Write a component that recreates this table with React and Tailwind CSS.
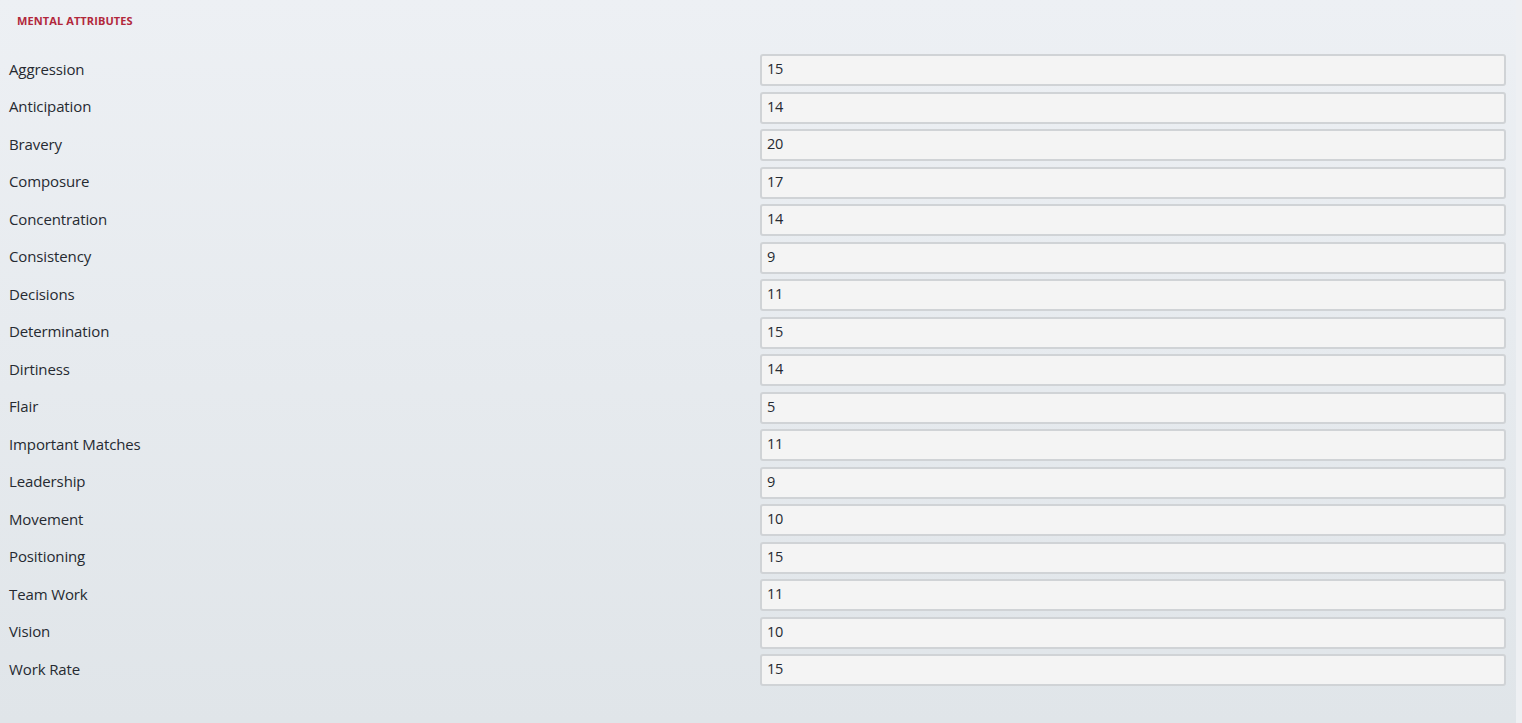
const attributes = [
  ['Aggression', 15],
  ['Anticipation', 14],
  ['Bravery', 20],
  ['Composure', 17],
  ['Concentration', 14],
  ['Consistency', 9],
  ['Decisions', 11],
  ['Determination', 15],
  ['Dirtiness', 14],
  ['Flair', 5],
  ['Important Matches', 11],
  ['Leadership', 9],
  ['Movement', 10],
  ['Positioning', 15],
  ['Team Work', 11],
  ['Vision', 10],
  ['Work Rate', 15],
]

export default function App() {
  return (
    <div
      className="flex h-[723px] w-full bg-gradient-to-b from-[#edf0f4] to-[#e0e5e9] text-[#262a31]"
      style={{ fontFamily: '"Open Sans", "Noto Sans", sans-serif' }}
    >
      <div className="flex-1 pl-[9px] pr-[10px]">
        {/* Section title */}
        <div className="flex h-[43px] items-center pb-[1px] pl-[8px] text-[11px] font-bold tracking-[0.1px] text-[#b2283c]">
          MENTAL ATTRIBUTES
        </div>

        <div className="flex flex-col gap-[5.5px] pt-[11px]">
          {attributes.map(([label, value]) => (
            <div key={label} className="flex h-[32px] items-center">
              <div className="w-[751px] pb-[2px] text-[15px] font-medium tracking-[-0.12px]">{label}</div>
              <div className="flex h-full flex-1 items-center rounded-[3px] border-2 border-[#d0d3d6] bg-[#f4f4f4] pb-[2px] pl-[5px] text-[14.5px] font-medium tracking-[-0.3px]">
                {value}
              </div>
            </div>
          ))}
        </div>
      </div>
      <div className="w-[6px] bg-[#eef0f3]" />
    </div>
  )
}
